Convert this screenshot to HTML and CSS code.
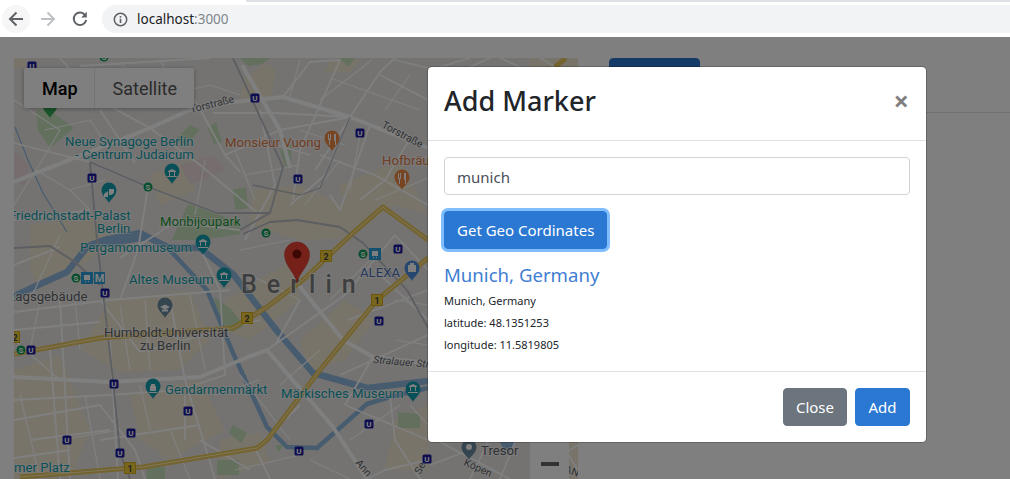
FILE: index.html
```html
<!DOCTYPE html>
<html lang="en">
<head>
<meta charset="utf-8">
<title>localhost:3000</title>
<link rel="stylesheet" href="styles.css">
</head>
<body>
<header class="chrome">
  <div class="tabline"></div>
  <div class="toolbar">
    <button class="nav nav-hover" aria-label="Back"><svg width="18" height="18" viewBox="0 0 18 18"><path class="ic" d="M16 9H3.5M9.5 2.5 3 9l6.5 6.500"/></svg></button>
    <button class="nav" aria-label="Forward"><svg width="18" height="18" viewBox="0 0 18 18"><path class="ic ic-off" d="M2 9h12.500M8.500 2.500 15 9l-6.500 6.500"/></svg></button>
    <button class="nav" aria-label="Reload"><svg width="18" height="18" viewBox="0 0 18 18"><path class="ic" d="M14.300 5.300A6.300 6.300 0 1 0 15.200 10"/><path class="ic-fill" d="M15.800 1.800V7.400H10.200Z"/></svg></button>
    <div class="omnibox">
      <svg class="info" width="15" height="15" viewBox="0 0 15 15"><circle class="info-ring" cx="7.500" cy="7.500" r="6.200"/><rect class="ic-fill" x="6.700" y="6.700" width="1.600" height="4.300"/><rect class="ic-fill" x="6.700" y="4" width="1.600" height="1.600"/></svg>
      <span class="url">localhost<span class="port">:3000</span></span>
    </div>
  </div>
</header>

<main class="page">
  <section class="map">
    <svg class="map-canvas" width="564" height="421" viewBox="14 58 564 421" role="img" aria-label="Map of Berlin">
      <defs>
        <g id="u"><rect class="b-u" x="-4.500" y="-4.500" width="9" height="9" rx="1.500"/><text class="b-t" y="3">U</text></g>
        <g id="s"><circle class="b-s" r="4.500"/><text class="b-t" y="2.800">S</text></g>
        <path id="pin" d="M0 0C-1.500-4-7.500-7-7.500-13A7.500 7.500 0 0 1 7.500-13C7.500-7 1.500-4 0 0Z"/>
      </defs>
      <rect class="land" x="14" y="58" width="564" height="421"/>

      <g class="tan">
        <path d="M243 80 265 62 276 70 270 100 240 104Z"/>
        <path d="M252 190 300 186 345 205 350 238 300 240 250 225Z"/>
        <path d="M150 175 190 160 195 190 160 205Z"/>
        <path d="M30 225 95 216 110 240 90 260 40 290 30 270Z"/>
        <path d="M110 300 190 290 210 340 180 370 120 372 80 350Z"/>
        <path d="M225 300 290 262 300 300 250 340 225 330Z"/>
        <path d="M300 340 345 300 375 320 345 360 310 372Z"/>
        <path d="M14 370 60 355 90 430 70 479 14 479Z"/>
        <path d="M130 395 200 380 225 430 170 460 140 440Z"/>
        <path d="M340 185 400 160 428 215 395 205 350 235Z"/>
        <path d="M395 420 428 405 428 470 385 470Z"/>
        <path d="M530 58h48v40h-48ZM540 442h38v37h-38Z"/>
        <path d="M14 58h12v10H14ZM330 60h30l-10 12h-25ZM220 440l40-8 10 30-50 17Z"/>
      </g>
      <g class="pink"><path d="M180 165 215 155 225 170 190 185Z"/><path d="M14 150 30 165 25 185 14 180Z"/></g>
      <g class="green">
        <path d="M36 110 52 112 74 128 50 148 38 130Z"/>
        <path d="M172 240 188 204 240 222 240 234 200 240Z"/>
        <path d="M214 297 232 310 244 326 232 332 218 320Z"/>
        <path d="M232 190 246 187 248 208 236 210Z"/>
        <path d="M208 128 216 122 222 142 214 144Z"/>
        <path d="M280 150 292 144 290 168 285 166Z"/>
        <path d="M240 58h30l-8 6-14 2Z"/>
        <path d="M340 58h15l-6 8-4-2Z"/>
        <path d="M217 460h22v15h-22ZM147 467h18v12h-18ZM398 412l22 2v14h-22ZM233 425l14 8-6 10-12-10ZM275 445h8l-4 7Z"/>
        <path d="M190 125 200 130 185 146 175 140Z"/>
      </g>

      <g class="water">
        <path class="river" d="M14 296 67 272 88 246 104 240 140 233 167 247 200 248 233 274 277 331 313 373 367 388 428 381"/>
        <path class="river thin" d="M167 247 207 290 233 353 267 427 287 447 317 448 367 404 390 397 428 388"/>
        <path class="canal" d="M15 127 28 160 43 193 67 232"/>
        <path d="M100 240 140 232 150 240 104 247Z"/>
        <path d="M500 442h16l-6 10-6-2Z"/>
      </g>

      <g class="roads">
        <path class="r-w" d="M14 182 150 128 190 110 233 102 283 97 350 117 428 148"/>
        <path class="r-w" d="M14 377 110 382 200 377 248 357 267 350 333 427 367 479"/>
        <path class="r-w" d="M297 283 343 340 373 357 428 363"/>
        <path class="r-w" d="M242 65 280 130 290 168"/>
        <path class="r-m" d="M213 113 275 113 350 117M60 58 95 98 150 128M80 66 210 58M14 143 90 162 147 187 217 213M14 220 90 210M120 258 175 222 240 230M148 187 138 250 120 300M14 265 60 247M100 110 135 163M150 128 200 165 260 215M195 100 225 155 240 172M225 155 280 130 350 117M260 110 275 185 245 240M283 97 310 62M310 62 340 60 300 150 293 200M350 117 380 72 395 58M315 170 350 118M350 117 325 175 290 205M370 125 340 210 330 195M408 142 385 180 360 200M380 75 428 100M395 60 428 68M428 205 375 175 320 155M310 155 260 140 225 155M14 312 110 300 230 290M14 330 100 322M14 400 110 395 180 390 225 375M14 420 100 405 135 450 145 479M60 300 70 479M170 300 185 380 215 479M100 300 140 352M140 352 260 320M225 375 220 290 200 248M300 300 275 345M267 350 345 295M348 320 428 290M428 270 395 235M395 235 345 295M375 270 428 320M340 375 428 335M345 405 428 440M373 357 345 405M428 460 385 470 367 479M390 397 395 440 420 479M300 405 255 448M200 440 250 470M255 448 270 479M185 395 185 440M100 440 200 425M110 340 118 479M50 350 60 479M30 440 110 430M14 458 70 450"/>
        <path class="r-t" d="M14 100 60 130 36 170 70 190 105 180M45 130 90 120 110 150M36 170 14 205M70 190 90 210M170 95 210 85 240 95M120 62 150 100M160 60 178 92M300 60 290 96M330 78 420 110M320 100 372 60M385 110 410 75M360 135 350 190M375 200 428 178M235 150 255 200M205 160 195 215M245 175 300 165M300 130 345 145M305 205 340 160M60 235 30 300M40 300 30 350M14 340 60 380M75 300 80 350M120 305 130 370M145 300 150 370M190 295 205 370M240 250 290 240M250 275 300 300M20 395 40 479M85 395 100 479M140 385 150 430M215 395 260 380M240 375 290 440M280 385 320 350M330 300 380 250M395 300 428 305M395 340 428 345M350 440 400 405M410 405 428 425M235 470 300 455M310 460 350 479M170 430 190 479M120 430 60 440"/>
        <path class="r-m" d="M440 442 510 479M488 442 470 479M515 442 500 479M560 442 578 470M430 465 470 450M545 465 578 445M540 58 578 80M440 67 470 58M520 67 500 58M470 67 490 58"/>
        <path class="r-g" d="M233 58 283 167 270 213 240 230"/>
        <path class="r-g" d="M90 162 148 187 217 213 270 213"/>
        <path class="r-g" d="M90 162 97 240 113 380 120 453 130 479"/>
        <path class="r-g" d="M14 248 50 246 75 262 100 285"/>
        <path class="r-g" d="M243 234 270 222 297 220 340 227 363 243 407 290 428 328"/>
        <path class="r-g thin" d="M253 185 300 195 320 188 350 117"/>
      </g>
      <g class="highway">
        <path d="M14 354 100 338 233 328 267 307 303 280 353 233 383 207 428 240"/>
        <path d="M20 477 143 467 257 448 267 440 320 370 377 300 428 258"/>
        <path d="M555 67 566 58"/>
      </g>
      <g class="highway-core">
        <path d="M14 354 100 338 233 328 267 307 303 280 353 233 383 207 428 240"/>
        <path d="M20 477 143 467 257 448 267 440 320 370 377 300 428 258"/>
      </g>

      <g class="pins-teal">
        <use href="#pin" x="172" y="184"/><use href="#pin" x="109" y="203"/><use href="#pin" x="203" y="255"/><use href="#pin" x="224" y="288"/><use href="#pin" x="153" y="399"/><use href="#pin" x="413" y="402"/>
      </g>
      <g class="pins-white">
        <path d="M167 176h10v1h-10ZM168 171l4-2 4 2v1h-8ZM169 172h1v4h-1ZM174 172h1v4h-1Z"/>
        <path d="M104 194l4-3v6h-4ZM109 189h5v4l-3 2h-2Z"/>
        <path d="M198 247h10v1h-10ZM199 241l4-2 4 2v1h-8ZM200 242h1v4h-1ZM205 242h1v4h-1Z"/>
        <path d="M219 280h10v1h-10ZM220 274l4-2 4 2v1h-8ZM221 275h1v4h-1ZM226 275h1v4h-1Z"/>
        <path d="M149 392h8v1h-8ZM151 384h4v2h-4ZM150 386h6v5h-6Z"/>
        <path d="M408 392h10v1h-10ZM409 386l4-2 4 2v1h-8ZM410 387h1v4h-1ZM415 387h1v4h-1Z"/>
      </g>
      <g class="pins-gray"><use href="#pin" x="165" y="318"/><use href="#pin" x="469" y="460"/></g>
      <path class="pins-white" d="M160 307l5-2.500 5 2.500-5 2.500ZM162 309.500h6v2h-6Z"/>
      <circle class="pins-white" cx="469" cy="447" r="3"/>
      <g class="pins-orange"><use href="#pin" x="332" y="151"/><use href="#pin" x="402" y="190"/></g>
      <path class="pins-white" d="M328 134h1v5h1v-5h1v6h-1v5h-1v-5h-1ZM334 134h2v11h-1v-4h-1ZM398 173h1v5h1v-5h1v6h-1v5h-1v-5h-1ZM404 173h2v11h-1v-4h-1Z"/>
      <use class="pins-blue" href="#pin" x="412" y="281"/>
      <path class="pins-white" d="M408 265h8v7h-8ZM410 263h4v2h-4Z"/>
      <use class="pins-green" href="#pin" x="50" y="118"/>

      <g class="map-labels">
        <text class="l-teal" x="65" y="146">Neue Synagoge Berlin</text>
        <text class="l-teal" x="75" y="159">- Centrum Judaicum</text>
        <text class="l-teal" x="9" y="220">Friedrichstadt-Palast</text>
        <text class="l-teal" x="97" y="233">Berlin</text>
        <text class="l-teal" x="80" y="252">Pergamonmuseum</text>
        <text class="l-teal" x="129" y="284">Altes Museum</text>
        <text class="l-teal" x="165" y="394">Gendarmenmarkt</text>
        <text class="l-teal" x="281" y="398">Märkisches Museum</text>
        <text class="l-teal" x="14" y="472">mer Platz</text>
        <text class="l-orange" x="225" y="147">Monsieur Vuong</text>
        <text class="l-orange" x="382" y="165">Hofbräu</text>
        <text class="l-green" x="160" y="226">Monbijoupark</text>
        <text class="l-gray" x="11" y="301">tagsgebäude</text>
        <text class="l-gray" x="104" y="337">Humboldt-Universität</text>
        <text class="l-gray" x="140" y="350">zu Berlin</text>
        <text class="l-gray" x="481" y="455">Tresor</text>
        <text class="l-navy" x="360" y="277">ALEXA</text>
        <text class="l-small" transform="translate(191 113) rotate(-14)">Torstraße</text>
        <text class="l-small" transform="translate(381 127) rotate(28)">Torstraße</text>
        <text class="l-small l-italic" transform="translate(373 363) rotate(5)">Stralauer Str</text>
        <text class="l-small" transform="translate(463 465) rotate(24)">Köpen</text>
        <text class="l-small" transform="translate(355 463) rotate(50)">Ann</text>
        <text class="l-small" transform="translate(420 475) rotate(-60)">Se</text>
        <text class="l-small" transform="translate(564 472) rotate(20)">AN</text>
        <text class="l-city" x="241" y="293">Berlin</text>
      </g>

      <g class="badges">
        <use href="#u" x="255" y="98"/><use href="#u" x="360" y="133"/><use href="#u" x="92" y="178"/><use href="#u" x="298" y="179"/><use href="#u" x="32" y="66"/><use href="#u" x="398" y="249"/><use href="#u" x="105" y="293"/><use href="#u" x="379" y="321"/><use href="#u" x="31" y="350"/><use href="#u" x="114" y="384"/><use href="#u" x="188" y="411"/><use href="#u" x="131" y="433"/><use href="#u" x="67" y="440"/><use href="#u" x="120" y="453"/><use href="#u" x="369" y="424"/><use href="#u" x="299" y="451"/><use href="#u" x="427" y="459"/>
        <use href="#s" x="148" y="187"/><use href="#s" x="266" y="233"/><use href="#s" x="76" y="278"/><use href="#s" x="21" y="350"/><use href="#s" x="363" y="254"/><use href="#s" x="104" y="57"/>
        <rect class="b-db" x="81" y="272" width="12" height="12"/><path class="pins-white" d="M84 275h6v5h-6ZM85 281h1v1h-1ZM88 281h1v1h-1Z"/>
        <rect class="b-db" x="94" y="272" width="11" height="12"/><text class="b-t b-m" x="99.500" y="282">M</text>
        <rect class="b-db" x="369" y="248" width="12" height="12"/><path class="pins-white" d="M372 251h6v5h-6ZM373 257h1v1h-1ZM376 257h1v1h-1Z"/>
        <g class="shields">
          <rect x="320.500" y="250.500" width="11" height="11"/><text x="326" y="259.500">2</text>
          <rect x="241.500" y="312.500" width="11" height="11"/><text x="247" y="321.500">2</text>
          <rect x="5.500" y="331.500" width="14" height="11"/><text x="15" y="340.500">2</text>
          <rect x="371.500" y="294.500" width="11" height="11"/><text x="377" y="303.500">1</text>
          <rect x="124.500" y="462.500" width="11" height="11"/><text x="130" y="471.500">1</text>
        </g>
      </g>

      <path class="pin-red" d="M297 283C295 272 284.500 266 284.500 254.500A12.500 12.500 0 0 1 309.500 254.500C309.500 266 299 272 297 283Z"/>
      <circle class="pin-dot" cx="297" cy="254" r="4.500"/>
    </svg>
    <div class="map-type">
      <span class="map-tab is-active">Map</span>
      <span class="map-tab">Satellite</span>
    </div>
    <div class="zoom-ctl"><span class="zoom-minus"></span></div>
  </section>
  <aside class="side">
    <div class="side-head"><button class="btn btn-primary side-btn" aria-label="Add Marker"></button></div>
  </aside>

  <div class="backdrop"></div>

  <div class="modal" role="dialog" aria-labelledby="modal-title">
    <div class="modal-header">
      <h2 class="modal-title" id="modal-title">Add Marker</h2>
      <span class="modal-close">×</span>
    </div>
    <div class="modal-body">
      <input class="field" type="text" value="munich">
      <button class="btn btn-primary btn-focus">Get Geo Cordinates</button>
      <h3 class="result-title">Munich, Germany</h3>
      <p class="result-line">Munich, Germany</p>
      <p class="result-line">latitude: 48.1351253</p>
      <p class="result-line">longitude: 11.5819805</p>
    </div>
    <div class="modal-footer">
      <button class="btn btn-secondary">Close</button>
      <button class="btn btn-primary btn-add">Add</button>
    </div>
  </div>
</main>
</body>
</html>
```

FILE: styles.css
```css
* { box-sizing: border-box; }
html, body { margin: 0; height: 100%; overflow: hidden; }
body { font-family: "Noto Sans", "Open Sans", sans-serif; background: #fff; color: #212529; }

/* browser chrome */
.chrome { height: 37px; background: #fff; position: relative; }
.tabline { height: 2px; margin-left: 246px; background: #dee1e6; }
.toolbar { display: flex; align-items: center; height: 35px; padding: 3px 0 0 2px; gap: 4px; margin-top: -2px; }
.nav { width: 28px; height: 28px; border: 0; padding: 0; border-radius: 50%; background: none; display: flex; align-items: center; justify-content: center; }
.nav-hover { background: #f6f6f7; }
.ic { fill: none; stroke: #5f6368; stroke-width: 2; }
.ic-off { stroke: #bdc1c6; }
.ic-fill { fill: #5f6368; }
.info-ring { fill: none; stroke: #5f6368; stroke-width: 1.500; }
.omnibox { flex: 1; height: 28px; margin-left: 4px; background: #f1f3f4; border-radius: 14px 0 0 14px; display: flex; align-items: center; padding-left: 11px; gap: 9px; }
.url { font-size: 13.500px; color: #202124; }
.port { color: #80868b; }

/* page */
.page { position: relative; height: 442px; display: flex; padding: 21px 0 0 14px; overflow: hidden; }
.map { position: relative; width: 564px; height: 421px; flex: none; }
.map-canvas { display: block; }
.map-type { position: absolute; top: 10px; left: 10px; display: flex; height: 40px; background: #fff; border-radius: 2px; box-shadow: 0 1px 4px rgba(0,0,0,.3); font: 18px Roboto, sans-serif; color: #565656; }
.map-tab { display: flex; align-items: center; padding: 0 17px 0 18px; }
.map-tab.is-active { color: #000; font-weight: 500; padding-right: 16px; border-right: 1px solid #e6e6e6; }
.zoom-ctl { position: absolute; left: 516px; top: 360px; width: 39px; height: 61px; background: #fff; display: flex; justify-content: center; align-items: flex-end; padding-bottom: 13px; }
.zoom-minus { width: 18px; height: 4px; background: #666; }

.side { flex: 1; margin-left: 31px; }
.side-head { height: 55px; border-bottom: 1px solid #dee2e6; }
.side-btn { width: 91px; }

.backdrop { position: absolute; inset: 0; background: rgba(0,0,0,.5); }

/* modal */
.modal { position: absolute; top: 29px; left: 427px; width: 500px; background: #fff; border: 1px solid rgba(0,0,0,.2); border-radius: 5px; background-clip: padding-box; }
.modal-header { height: 74px; padding: 0 16px 4px; display: flex; align-items: center; justify-content: space-between; border-bottom: 1px solid #dee2e6; }
.modal-title { margin: 0; font-size: 27px; font-weight: 500; line-height: 1.2; color: #212529; }
.modal-close { font-size: 27px; font-weight: 700; color: #000; opacity: .5; line-height: 1; margin: -3px 1px 0 0; }
.modal-body { padding: 16px 16px 15px; }
.field { display: block; width: 100%; height: 38px; padding: 7px 12px 5px; margin-bottom: 16px; font: 15px "Noto Sans", sans-serif; color: #495057; background: #fff; border: 1px solid #ced4da; border-radius: 4px; }
.btn { height: 38px; padding: 0 12px; border: 1px solid transparent; border-radius: 4px; font: 15px "Noto Sans", sans-serif; color: #fff; }
.btn-primary { background: #2a78d2; border-color: #2a78d2; }
.btn-secondary { background: #6c757d; border-color: #6c757d; }
.btn-add { min-width: 55px; }
.btn-focus { display: block; box-shadow: 0 0 0 3px #80bdff; }
.result-title { margin: 14px 0 3px; font-size: 18.600px; font-weight: 400; line-height: 24px; color: #3f7ed2; }
.result-line { margin: 0; font-size: 11px; line-height: 22px; color: #212529; }
.modal-footer { display: flex; justify-content: flex-end; gap: 8px; padding: 16px; border-top: 1px solid #dee2e6; }

/* map paint */
.land { fill: #e9e7e3; }
.tan path { fill: #f0e8d2; }
.pink path { fill: #ecdcdc; }
.green path { fill: #c4e0ba; }
.water path { fill: #8fb8de; }
.water .river { fill: none; stroke: #8fb8de; stroke-width: 6.500; stroke-linejoin: round; }
.water .river.thin { stroke-width: 4.500; }
.water .canal { fill: none; stroke: #8fb8de; stroke-width: 1.200; }
.roads path { fill: none; stroke-linejoin: round; }
.r-w { stroke: #fff; stroke-width: 4; }
.r-m { stroke: #fff; stroke-width: 1.800; }
.r-t { stroke: #fff; stroke-width: 1.200; }
.r-g { stroke: #b9bcc4; stroke-width: 1.800; }
.r-g.thin { stroke-width: 1.300; }
.highway path { fill: none; stroke: #e8c75c; stroke-width: 5; stroke-linejoin: round; }
.highway-core path { fill: none; stroke: #fbeeb8; stroke-width: 1; stroke-linejoin: round; }
.pins-teal { fill: #129eaf; }
.pins-white { fill: #fff; }
.pins-gray { fill: #6b8aa0; }
.pins-orange { fill: #f08a45; }
.pins-blue { fill: #4a8ee0; }
.pins-green { fill: #34a853; }
.map-labels text { font: 13.200px Roboto, sans-serif; paint-order: stroke; stroke: rgba(255,255,255,.6); stroke-width: 2px; }
.l-teal { fill: #129eaf; }
.l-orange { fill: #e07a45; }
.l-green { fill: #1f9a3a; }
.l-gray { fill: #5f6368; }
.l-navy { fill: #4a70b8; }
.map-labels .l-small { font-size: 10.500px; fill: #5f6368; }
.map-labels .l-italic { font-style: italic; }
.map-labels .l-city { font-size: 25px; font-weight: 500; letter-spacing: 10px; fill: #7c7c7c; }
.b-u { fill: #1a1a9e; }
.b-s { fill: #0f9d58; }
.b-db { fill: #2aa3dc; }
.b-t { font: 700 8px Roboto, sans-serif; fill: #fff; text-anchor: middle; }
.b-m { font-size: 11px; }
.shields rect { fill: #f3cf3a; stroke: #d8ae1a; }
.shields text { font: 700 9px Roboto, sans-serif; fill: #444; text-anchor: middle; }
.pin-red { fill: #ea4335; stroke: #c5281c; stroke-width: .5; }
.pin-dot { fill: #7a1009; }
```
